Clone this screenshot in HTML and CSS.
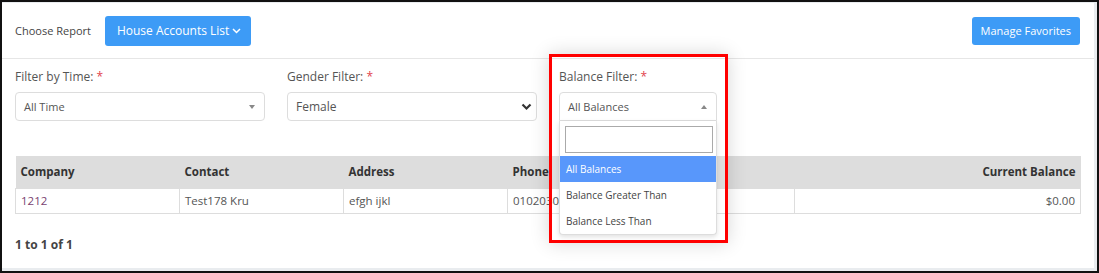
FILE: index.html
```html
<!DOCTYPE html>
<html lang="en">
<head>
  <meta charset="UTF-8">
  <title>House Accounts List</title>
  <link rel="stylesheet" href="styles.css">
</head>
<body>
  <div class="frame">
    <div class="card">
      <div class="topbar">
        <span class="choose">Choose Report</span>
        <button class="btn btn-report">House Accounts List
          <svg width="9" height="6" viewBox="0 0 9 6"><path d="M1 1l3.5 3.5L8 1" fill="none" stroke="#fff" stroke-width="1.5"/></svg>
        </button>
        <button class="btn btn-fav">Manage Favorites</button>
      </div>

      <div class="filters">
        <div class="filter filter-time">
          <label>Filter by Time: <span class="req">*</span></label>
          <div class="select">All Time <span class="caret-down"></span></div>
        </div>
        <div class="filter filter-gender">
          <label>Gender Filter: <span class="req">*</span></label>
          <div class="select">Female
            <svg class="chev" width="11" height="8" viewBox="0 0 11 8"><path d="M1.5 1.5l4 4 4-4" fill="none" stroke="#333" stroke-width="2.2"/></svg>
          </div>
        </div>
        <div class="filter filter-balance">
          <label>Balance Filter: <span class="req">*</span></label>
          <div class="select select-open">All Balances <span class="caret-up"></span></div>
          <div class="dropdown">
            <div class="search"><input type="text"></div>
            <ul>
              <li class="active">All Balances</li>
              <li>Balance Greater Than</li>
              <li>Balance Less Than</li>
            </ul>
          </div>
          <div class="highlight"></div>
        </div>
      </div>

      <table class="report">
        <thead>
          <tr>
            <th class="c1">Company</th>
            <th class="c2">Contact</th>
            <th class="c3">Address</th>
            <th class="c4">Phone</th>
            <th class="num">Current Balance</th>
          </tr>
        </thead>
        <tbody>
          <tr>
            <td class="company">1212</td>
            <td>Test178 Kru</td>
            <td>efgh ijkl</td>
            <td>0102030405</td>
            <td class="num">$0.00</td>
          </tr>
        </tbody>
      </table>

      <div class="paging">1 to 1 of 1</div>
    </div>
  </div>
</body>
</html>
```

FILE: styles.css
```css
* {
  box-sizing: border-box;
}
body {
  margin: 0;
  font-family: "Open Sans", "Liberation Sans", sans-serif;
  color: #555;
}
.frame {
  width: 1099px;
  height: 273px;
  border: 2px solid #111;
  background: #e9ecef;
  padding: 1px 3px 3px 0;
}
.card {
  background: #fff;
  height: 100%;
  padding: 0 13px;
}
.topbar {
  display: flex;
  align-items: center;
  height: 56px;
  margin: 0 -13px;
  padding: 0 13px;
  border-bottom: 1px solid #e6e6e6;
}
.choose {
  font-size: 11px;
  color: #444;
  margin-right: 14px;
}
.btn {
  background: #3d9bf6;
  color: #fff;
  border: none;
  border-radius: 3px;
  font-family: inherit;
  cursor: pointer;
}
.btn-report {
  height: 30px;
  padding: 0 10px 0 12px;
  font-size: 12px;
  display: flex;
  align-items: center;
  gap: 3px;
}
.btn-fav {
  margin-left: auto;
  height: 28px;
  padding: 0 9px;
  font-size: 11px;
  margin-right: 1px;
}
.filters {
  display: flex;
  gap: 22px;
  padding-top: 9px;
}
.filter {
  width: 250px;
}
.filter-balance {
  width: 158px;
  position: relative;
}
label {
  display: block;
  font-size: 12px;
  line-height: 18px;
  color: #555;
  margin-bottom: 6px;
}
.req {
  color: #e2434d;
}
.select {
  position: relative;
  height: 29px;
  border: 1px solid #ddd;
  border-radius: 4px;
  font-size: 11px;
  color: #555;
  padding: 0 8px;
  display: flex;
  align-items: center;
}
.filter-gender .select {
  font-size: 12px;
}
.chev {
  position: absolute;
  right: 4px;
  top: 10px;
}
.caret-down, .caret-up {
  position: absolute;
  right: 9px;
  top: 12px;
  border-left: 3.5px solid transparent;
  border-right: 3.5px solid transparent;
}
.caret-down {
  border-top: 4px solid #888;
}
.caret-up {
  border-bottom: 4px solid #888;
}
.select-open {
  border-radius: 4px 4px 0 0;
}
.dropdown {
  position: absolute;
  left: 0;
  right: 0;
  top: 53px;
  background: #fff;
  border: 1px solid #ddd;
  border-top: none;
  border-radius: 0 0 4px 4px;
  box-shadow: 0 2px 5px rgba(0, 0, 0, 0.12);
  z-index: 2;
}
.search {
  padding: 5px 3px 3px 5px;
}
.search input {
  width: 100%;
  height: 27px;
  border: 1px solid #aaa;
  outline: none;
}
.dropdown ul {
  list-style: none;
  margin: 0;
  padding: 0;
}
.dropdown li {
  height: 26px;
  line-height: 26px;
  padding-left: 6px;
  font-size: 10px;
  color: #444;
}
.dropdown li.active {
  background: #5897fb;
  color: #fff;
}
.highlight {
  position: absolute;
  left: -10px;
  top: -14px;
  width: 179px;
  height: 189px;
  border: 3px solid #f00;
  box-shadow: 0 0 18px rgba(0, 0, 0, 0.16);
  z-index: 3;
  pointer-events: none;
}
.report {
  width: 1066px;
  margin-top: 35px;
  border-collapse: collapse;
  font-size: 11.5px;
}
.report th {
  background: #ddd;
  color: #333;
  font-weight: bold;
  text-align: left;
  height: 32px;
  padding: 0 5px;
}
.report td {
  height: 25px;
  padding: 0 5px;
  border: 1px solid #ddd;
  color: #555;
}
.report .c1, .report .c2, .report .c3 {
  width: 164px;
}
.report .c4 {
  width: 287px;
}
.report .num {
  text-align: right;
}
.report .company {
  color: #7a3f70;
}
.paging {
  margin-top: 22px;
  font-size: 12px;
  font-weight: bold;
  color: #444;
}
```
